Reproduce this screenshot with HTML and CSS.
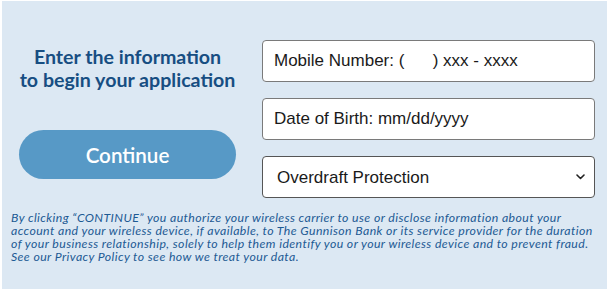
FILE: index.html
```html
<!DOCTYPE html>
<html lang="en">
<head>
<meta charset="utf-8">
<title>Application</title>
<link rel="stylesheet" href="styles.css">
</head>
<body>
<div class="panel">
  <div class="top">
    <div class="intro">
      <h1 class="heading">Enter the information<br>to begin your application</h1>
      <button class="continue" type="button">Continue</button>
    </div>
    <form class="fields">
      <input class="field" type="text" value="Mobile Number: (      ) xxx - xxxx">
      <input class="field" type="text" value="Date of Birth: mm/dd/yyyy">
      <div class="select-wrap">
        <select class="field select">
          <option>Overdraft Protection</option>
        </select>
        <svg class="chevron" width="9" height="6" viewBox="0 0 9 6" aria-hidden="true"><path d="M1 1 L4.5 4.5 L8 1" fill="none" stroke="#222" stroke-width="1.6" stroke-linecap="round" stroke-linejoin="round"/></svg>
      </div>
    </form>
  </div>
  <p class="disclaimer">By clicking “CONTINUE” you authorize your wireless carrier to use or disclose information about your<br>account and your wireless device, if available, to The Gunnison Bank or its service provider for the duration<br>of your business relationship, solely to help them identify you or your wireless device and to prevent fraud.<br>See our Privacy Policy to see how we treat your data.</p>
</div>
</body>
</html>
```
FILE: styles.css
```css
html, body {
  margin: 0;
  padding: 0;
  background: #ffffff;
}
.panel {
  margin: 1px 4px 0 2px;
  height: 288px;
  box-sizing: border-box;
  background: #dce8f3;
  padding: 39px 12px 0 9px;
  display: flex;
  flex-direction: column;
}
.top {
  display: grid;
  grid-template-columns: 217px 333px;
  column-gap: 26px;
  padding-left: 8px;
}
.intro {
  display: flex;
  flex-direction: column;
  align-items: stretch;
}
.heading {
  margin: 5px 0 0 0;
  font-family: Lato, "Open Sans", sans-serif;
  font-weight: 700;
  font-size: 19.6px;
  line-height: 23px;
  color: #174e82;
  text-align: center;
  white-space: nowrap;
}
.continue {
  margin-top: 39px;
  height: 49px;
  border: none;
  border-radius: 25px;
  background: #5799c6;
  color: #ffffff;
  font-family: Lato, "Open Sans", sans-serif;
  font-weight: 600;
  font-size: 20.6px;
  padding: 0;
}
.fields {
  display: flex;
  flex-direction: column;
  gap: 16px;
  margin: 0;
}
.field {
  box-sizing: border-box;
  width: 333px;
  height: 42px;
  margin: 0;
  border: 1px solid #7a7a7a;
  border-radius: 4px;
  background: #ffffff;
  font-family: "Liberation Sans", Arial, sans-serif;
  font-size: 17px;
  color: #1a1a1a;
  padding: 0 11px;
  white-space: pre;
}
.select-wrap {
  position: relative;
  height: 42px;
}
.select {
  -webkit-appearance: none;
  appearance: none;
  padding-left: 14px;
  border-color: #555;
}
.chevron {
  position: absolute;
  right: 10px;
  top: 18px;
  pointer-events: none;
}
.disclaimer {
  margin: 13px 0 0 0;
  font-family: Lato, "Open Sans", sans-serif;
  font-style: italic;
  font-size: 12.3px;
  letter-spacing: 0.4px;
  line-height: 13px;
  color: #1d5a93;
  white-space: nowrap;
}
```
